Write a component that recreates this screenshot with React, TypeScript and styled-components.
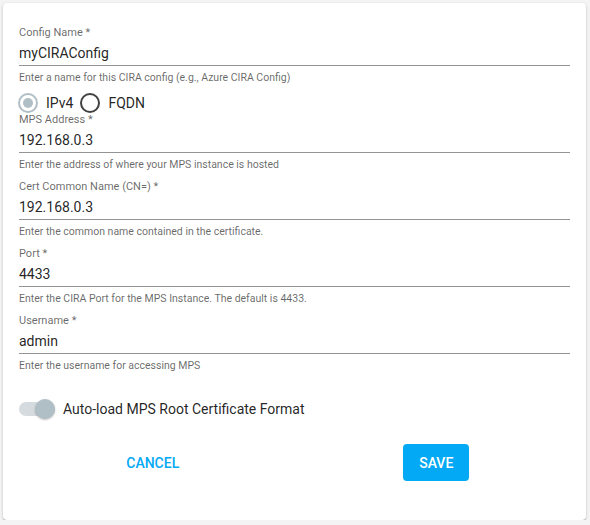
import { FC } from 'react'
import styled, { createGlobalStyle } from 'styled-components'

const GlobalStyle = createGlobalStyle`
    html, body {
        margin: 0;
        padding: 0;
        background: #f4f4f4;
        font-family: Roboto, "Liberation Sans", Arial, sans-serif;
    }
    body {
        padding: 3px 4px 0 3px;
    }
`

type FieldProps = {
    label: string,
    value: string,
    hint: string
}

const Field:FC<FieldProps> = ({ label, value, hint })=>{
    return(
        <FieldWrap>
            <FieldLabel>{label}</FieldLabel>
            <FieldInput>{value}</FieldInput>
            <FieldHint>{hint}</FieldHint>
        </FieldWrap>
    )
}

const App:FC = ()=>{
    return(
        <>
            <GlobalStyle />
            <Card>
                <Field
                    label="Config Name *"
                    value="myCIRAConfig"
                    hint="Enter a name for this CIRA config (e.g., Azure CIRA Config)"
                />
                <RadioGroup>
                    <RadioOption>
                        <RadioCircle $checked />
                        <span>IPv4</span>
                    </RadioOption>
                    <RadioOption>
                        <RadioCircle />
                        <span>FQDN</span>
                    </RadioOption>
                </RadioGroup>
                <Field
                    label="MPS Address *"
                    value="192.168.0.3"
                    hint="Enter the address of where your MPS instance is hosted"
                />
                <Field
                    label="Cert Common Name (CN=) *"
                    value="192.168.0.3"
                    hint="Enter the common name contained in the certificate."
                />
                <Field
                    label="Port *"
                    value="4433"
                    hint="Enter the CIRA Port for the MPS Instance. The default is 4433."
                />
                <Field
                    label="Username *"
                    value="admin"
                    hint="Enter the username for accessing MPS"
                />
                <ToggleRow>
                    <Toggle>
                        <ToggleThumb />
                    </Toggle>
                    <span>Auto-load MPS Root Certificate Format</span>
                </ToggleRow>
                <Actions>
                    <TextButton type="button">Cancel</TextButton>
                    <FilledButton type="button">Save</FilledButton>
                </Actions>
            </Card>
        </>
    )
}

const Card = styled.div`
    box-sizing: border-box;
    width: 583px;
    height: 517px;
    background: #fff;
    border-radius: 4px;
    box-shadow: 0 1px 3px rgba(0, 0, 0, 0.2), 0 1px 1px rgba(0, 0, 0, 0.14), 0 2px 1px -1px rgba(0, 0, 0, 0.12);
    padding: 23px 16px 0 16px;
`

const FieldWrap = styled.div`
    display: flex;
    flex-direction: column;
    margin-bottom: 8px;
`

const FieldLabel = styled.div`
    font-size: 11px;
    line-height: 14px;
    color: rgba(0, 0, 0, 0.6);
`

const FieldInput = styled.div`
    margin-top: 3px;
    font-size: 14px;
    line-height: 20px;
    padding-bottom: 2px;
    color: rgba(0, 0, 0, 0.87);
    border-bottom: 1px solid rgba(0, 0, 0, 0.42);
`

const FieldHint = styled.div`
    margin-top: 5px;
    font-size: 10.5px;
    line-height: 14px;
    color: rgba(0, 0, 0, 0.6);
`

const RadioGroup = styled.div`
    display: flex;
    align-items: center;
    gap: 7px;
    height: 20px;
    margin: 0 0 0 -1px;
`

const RadioOption = styled.label`
    display: flex;
    align-items: center;
    gap: 8px;
    font-size: 14px;
    color: rgba(0, 0, 0, 0.87);
`

const RadioCircle = styled.span<{ $checked?: boolean }>`
    box-sizing: border-box;
    width: 20px;
    height: 20px;
    border-radius: 50%;
    border: 2px solid ${p => p.$checked ? '#b0bec5' : 'rgba(0, 0, 0, 0.75)'};
    display: flex;
    align-items: center;
    justify-content: center;
    &::after {
        content: '';
        display: ${p => p.$checked ? 'block' : 'none'};
        width: 10px;
        height: 10px;
        border-radius: 50%;
        background: #b0bec5;
    }
`

const ToggleRow = styled.label`
    display: flex;
    align-items: center;
    gap: 8px;
    height: 20px;
    margin-top: 26px;
    font-size: 14px;
    color: rgba(0, 0, 0, 0.87);
`

const Toggle = styled.span`
    position: relative;
    width: 36px;
    height: 14px;
    border-radius: 7px;
    background: #d5dbde;
`

const ToggleThumb = styled.span`
    position: absolute;
    right: 0;
    top: -3px;
    width: 20px;
    height: 20px;
    border-radius: 50%;
    background: #b0bec5;
    box-shadow: 0 1px 2px rgba(0, 0, 0, 0.25);
`

const Actions = styled.div`
    display: grid;
    grid-template-columns: 1fr 1fr;
    justify-items: center;
    align-items: center;
    margin-top: 25px;
`

const TextButton = styled.button`
    font-family: inherit;
    font-size: 14px;
    font-weight: 500;
    text-transform: uppercase;
    color: #03a9f4;
    background: transparent;
    border: none;
    padding: 0 16px;
    height: 36px;
    margin-left: -8px;
`

const FilledButton = styled.button`
    font-family: inherit;
    font-size: 14px;
    font-weight: 500;
    text-transform: uppercase;
    color: #fff;
    background: #03a9f4;
    border: none;
    border-radius: 4px;
    padding: 0 16px;
    height: 37px;
    min-width: 66px;
    margin-left: 8px;
`

export default App
